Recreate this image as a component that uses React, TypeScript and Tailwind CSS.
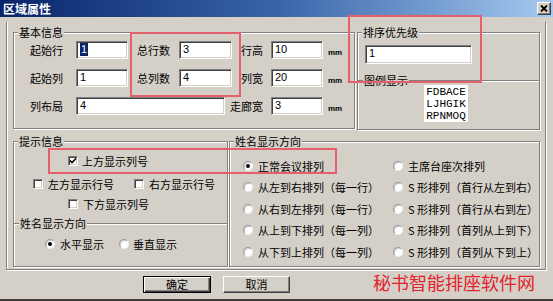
import React from "react";

const sunken =
  "border border-t-[#808080] border-l-[#808080] border-b-white border-r-white shadow-[inset_1px_1px_0_#404040,inset_-1px_-1px_0_#d4d0c8]";

function Input({ w, h = "h-[18px]", value, selected = false, className = "" }: { w: string; h?: string; value: string; selected?: boolean; className?: string }) {
  return (
    <div className={`${w} ${h} ${sunken} bg-white flex items-start pl-[3px] pt-[1px] font-['Liberation_Sans',sans-serif] text-[11px] leading-[13px] ${className}`}>
      {selected ? <span className="bg-[#0a246a] text-white px-[1px]">{value}</span> : <span>{value}</span>}
    </div>
  );
}

function Group({ label, className = "", children }: { label: string; className?: string; children?: React.ReactNode }) {
  return (
    <div className={`relative border border-[#808080] shadow-[inset_1px_1px_0_#fff,1px_1px_0_#fff] ${className}`}>
      <span className="absolute -top-[8px] left-[4px] bg-[#d4d0c8] px-px leading-[14px] whitespace-nowrap">{label}</span>
      {children}
    </div>
  );
}

function Sep({ label, className = "" }: { label: string; className?: string }) {
  return (
    <div className={`relative h-0 border-t border-t-[#808080] border-b border-b-white ${className}`}>
      <span className="absolute -top-[8px] left-[5px] bg-[#d4d0c8] px-px leading-[14px] whitespace-nowrap">{label}</span>
    </div>
  );
}

function Checkbox({ checked = false }: { checked?: boolean }) {
  return (
    <div className={`w-[10px] h-[10px] shrink-0 bg-white ${sunken} flex items-center justify-center`}>
      {checked && (
        <svg width="8" height="8" viewBox="0 0 8 8">
          <polyline points="1,3.5 3,5.5 7,1.5" fill="none" stroke="#000" strokeWidth="1.6" />
        </svg>
      )}
    </div>
  );
}

function Radio({ checked = false }: { checked?: boolean }) {
  return (
    <div className="w-[10px] h-[10px] shrink-0 rounded-full bg-white border border-t-[#9a9a9a] border-l-[#9a9a9a] border-b-[#f0f0f0] border-r-[#f0f0f0] shadow-[inset_1px_1px_0_#c8c8c8] flex items-center justify-center">
      {checked && <div className="w-[4px] h-[4px] rounded-full bg-black" />}
    </div>
  );
}

function Label({ w, children, right = false }: { w: string; children: React.ReactNode; right?: boolean }) {
  return <div className={`${w} shrink-0 whitespace-nowrap leading-[14px] ${right ? "text-right" : ""}`}>{children}</div>;
}

function MM() {
  return <div className="self-end mb-[2px] ml-[5px] font-['Liberation_Sans',sans-serif] text-[8px] font-bold leading-[9px]">mm</div>;
}

const radioRows: [string, string][] = [
  ["正常会议排列", "主席台座次排列"],
  ["从左到右排列（每一行）", "S 形排列（首行从左到右）"],
  ["从右到左排列（每一行）", "S 形排列（首行从右到左）"],
  ["从上到下排列（每一列）", "S 形排列（首列从上到下）"],
  ["从下到上排列（每一列）", "S 形排列（首列从下到上）"],
];

export default function App() {
  return (
    <div className="relative w-[553px] h-[301px] overflow-hidden bg-[#d4d0c8] text-black text-[11px] font-['Noto_Sans_CJK_SC','Noto_Sans',sans-serif] flex flex-col border-b-2 border-b-[#404040]">
      {/* Title bar */}
      <div className="h-[17px] shrink-0 flex items-center bg-gradient-to-r from-[#0a246a] via-[#3a64a8] to-[#a6caf0]">
        <span className="ml-[3px] text-white font-bold text-[12px] leading-[14px]">区域属性</span>
        <div className="ml-auto mr-[2px] w-[14px] h-[13px] bg-[#d4d0c8] border border-t-white border-l-white border-b-[#404040] border-r-[#404040] shadow-[inset_-1px_-1px_0_#808080] flex items-center justify-center">
          <svg width="8" height="7" viewBox="0 0 8 7">
            <path d="M1 0.5 L7 6.5 M7 0.5 L1 6.5" stroke="#000" strokeWidth="1.8" />
          </svg>
        </div>
      </div>

      {/* Outer frame */}
      <div className="mt-[5px] ml-[6px] w-[540px] border border-t-0 border-[#808080] shadow-[inset_1px_0_0_#fff,1px_1px_0_#fff] pl-[6px] pt-[10px] pb-[2px]">
        {/* top row */}
        <div className="flex items-start">
          <Group label="基本信息" className="w-[342px] h-[97px]">
            <div className="flex flex-col gap-[10px] pt-[8px]">
              <div className="flex items-center">
                <div className="ml-[16px]" />
                <Label w="w-[33px]">起始行</Label>
                <Input w="w-[52px] ml-[13px]" value="1" selected />
                <Label w="w-[33px] ml-[9px]">总行数</Label>
                <Input w="w-[53px] ml-[9px]" value="3" />
                <Label w="w-[31px]" right>行高</Label>
                <Input w="w-[52px] ml-[8px]" value="10" />
                <MM />
              </div>
              <div className="flex items-center">
                <div className="ml-[16px]" />
                <Label w="w-[33px]">起始列</Label>
                <Input w="w-[52px] ml-[13px]" value="1" />
                <Label w="w-[33px] ml-[9px]">总列数</Label>
                <Input w="w-[53px] ml-[9px]" value="4" />
                <Label w="w-[31px]" right>列宽</Label>
                <Input w="w-[52px] ml-[8px]" value="20" />
                <MM />
              </div>
              <div className="flex items-center">
                <div className="ml-[16px]" />
                <Label w="w-[33px]">列布局</Label>
                <Input w="w-[149px] ml-[13px]" value="4" />
                <Label w="w-[38px]" right>走廊宽</Label>
                <Input w="w-[52px] ml-[8px]" value="3" />
                <MM />
              </div>
            </div>
          </Group>
          <Group label="排序优先级" className="ml-[2px] w-[183px] h-[98px]">
            <Input w="w-[107px] ml-[7px] mt-[12px]" h="h-[19px]" value="1" />
            <Sep label="图例显示" className="mt-[16px]" />
            <div className="ml-[66px] mt-[3px] w-[44px] h-[37px] bg-white flex flex-col items-center pt-[1px] font-['Liberation_Mono',monospace] text-[11px] leading-[12px]">
              <span>FDBACE</span>
              <span>LJHGIK</span>
              <span>RPNMOQ</span>
            </div>
          </Group>
        </div>

        {/* bottom row */}
        <div className="flex items-start mt-[11px]">
          <Group label="提示信息" className="w-[215px] h-[126px]">
            <div className="flex items-center h-[14px] mt-[12px] ml-[54px]">
              <Checkbox checked />
              <span className="ml-[4px] whitespace-nowrap">上方显示列号</span>
            </div>
            <div className="flex items-center h-[14px] mt-[9px] ml-[19px]">
              <Checkbox />
              <span className="ml-[5px] w-[66px] whitespace-nowrap">左方显示行号</span>
              <div className="ml-[20px]" />
              <Checkbox />
              <span className="ml-[5px] whitespace-nowrap">右方显示行号</span>
            </div>
            <div className="flex items-center h-[14px] mt-[6px] ml-[54px]">
              <Checkbox />
              <span className="ml-[5px] whitespace-nowrap">下方显示列号</span>
            </div>
            <Sep label="姓名显示方向" className="mt-[12px]" />
            <div className="flex items-center h-[14px] mt-[12px] ml-[31px]">
              <Radio checked />
              <span className="ml-[5px] w-[44px] whitespace-nowrap">水平显示</span>
              <div className="ml-[15px]" />
              <Radio />
              <span className="ml-[4px] whitespace-nowrap">垂直显示</span>
            </div>
          </Group>
          <Group label="姓名显示方向" className="ml-[1px] w-[311px] h-[126px]">
            <div className="mt-[13px] pl-[13px] grid grid-cols-[150px_1fr]">
              {radioRows.map(([a, b], i) => (
                <React.Fragment key={i}>
                  <div className="flex items-center h-[21.5px]">
                    <Radio checked={i === 0} />
                    <span className="ml-[5px] whitespace-nowrap">{a}</span>
                  </div>
                  <div className="flex items-center h-[21.5px]">
                    <Radio />
                    <span className="ml-[5px] whitespace-nowrap">{b}</span>
                  </div>
                </React.Fragment>
              ))}
            </div>
          </Group>
        </div>
      </div>

      {/* buttons */}
      <div className="flex items-start mt-[6px]">
        <button className="ml-[143px] w-[68px] h-[17px] border border-black bg-[#d4d0c8] shadow-[inset_1px_1px_0_#fff,inset_-1px_-1px_0_#404040,inset_-2px_-2px_0_#808080] text-[11px] leading-[13px] flex items-center justify-center">
          确定
        </button>
        <button className="ml-[12px] w-[67px] h-[17px] bg-[#d4d0c8] border border-t-white border-l-white border-b-[#404040] border-r-[#404040] shadow-[inset_-1px_-1px_0_#808080] text-[11px] leading-[13px] flex items-center justify-center">
          取消
        </button>
        <span className="ml-[83px] -mt-[5px] text-[18px] leading-[22px] text-[#e3232c] whitespace-nowrap">秘书智能排座软件网</span>
      </div>

      {/* red annotation boxes */}
      <div className="absolute left-[130px] top-[32px] w-[111px] h-[65px] border-2 border-[#e3606c] pointer-events-none" />
      <div className="absolute left-[348px] top-[15px] w-[134px] h-[68px] border-2 border-[#e3606c] pointer-events-none" />
      <div className="absolute left-[48px] top-[148px] w-[289px] h-[26px] border-2 border-[#e3606c] pointer-events-none" />
    </div>
  );
}
